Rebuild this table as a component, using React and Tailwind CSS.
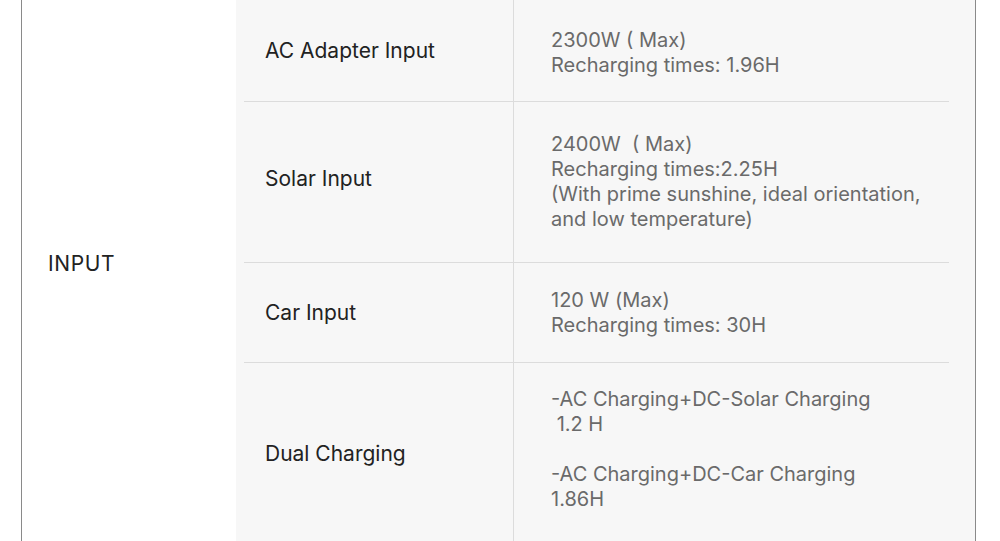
const rows = [
  {
    label: "AC Adapter Input",
    h: "h-[102px]",
    pad: "pt-[4px]",
    lines: ["2300W ( Max)", "Recharging times: 1.96H"],
  },
  {
    label: "Solar Input",
    h: "h-[161px]",
    lpad: "pb-[6px]",
    lines: [
      "2400W  ( Max)",
      "Recharging times:2.25H",
      "(With prime sunshine, ideal orientation,",
      "and low temperature)",
    ],
  },
  {
    label: "Car Input",
    h: "h-[100px]",
    lines: ["120 W (Max)", "Recharging times: 30H"],
  },
  {
    label: "Dual Charging",
    h: "h-[182px]",
    pad: "pb-[10px]",
    lines: [
      "-AC Charging+DC-Solar Charging",
      "\u00a01.2 H",
      "\u00a0",
      "-AC Charging+DC-Car Charging",
      "1.86H",
    ],
  },
];

export default function App() {
  return (
    <div
      className="w-[1000px] h-[541px] overflow-hidden bg-white"
      style={{ fontFamily: "Inter, \"Noto Sans\", sans-serif" }}
    >
      <div className="ml-[21px] w-[955px] flex border-l border-r border-[#8a8a8a] min-h-[541px]">
        <div className="w-[214px] pl-[26px] pt-[251px] text-[21px] tracking-[0.03em] leading-[25px] text-[#222]">
          INPUT
        </div>
        <div className="flex-1 bg-[#f7f7f7] pl-[8px] pr-[26px]">
          {rows.map((r, i) => (
            <div
              key={r.label}
              className={`flex ${r.h} ${i < rows.length - 1 ? "border-b border-[#dcdcdc]" : ""}`}
            >
              <div
                className={`w-[270px] border-r border-[#dcdcdc] pl-[21px] flex items-center text-[21px] text-[#222] ${r.lpad || ""}`}
              >
                {r.label}
              </div>
              <div
                className={`flex-1 pl-[37px] flex flex-col justify-center text-[20px] leading-[25px] text-[#6a6a6a] ${r.pad || ""}`}
              >
                {r.lines.map((t, j) => (
                  <div key={j} className="whitespace-pre">
                    {t}
                  </div>
                ))}
              </div>
            </div>
          ))}
        </div>
      </div>
    </div>
  );
}
